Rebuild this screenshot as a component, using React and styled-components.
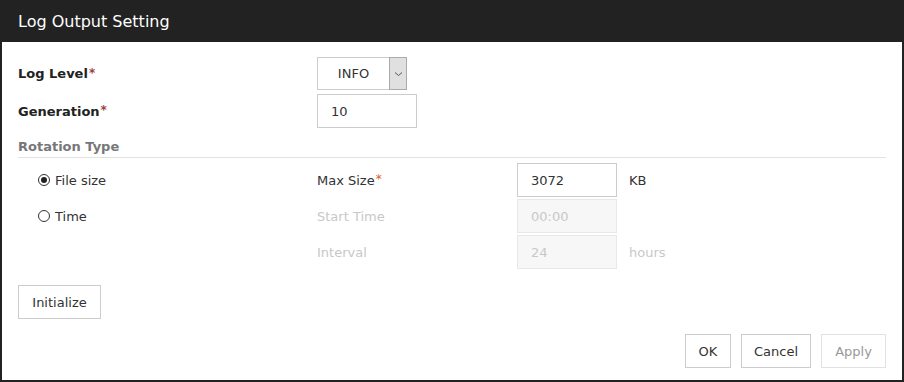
import React from "react";
import styled, { createGlobalStyle } from "styled-components";

const Global = createGlobalStyle`
  html, body { margin: 0; padding: 0; background: #fff; }
  body { font-family: "DejaVu Sans", "Noto Sans", sans-serif; }
`;

const Dialog = styled.div`
  width: 904px;
  height: 382px;
  box-sizing: border-box;
  border: 2px solid #222;
  border-top: none;
  display: flex;
  flex-direction: column;
  background: #fff;
`;

const Title = styled.div`
  height: 42px;
  background: #222;
  color: #fff;
  font-size: 16px;
  display: flex;
  align-items: center;
  margin: 0 -2px;
  padding-left: 18px;
`;

const Body = styled.div`
  flex: 1;
  padding: 15px 16px 0 16px;
  display: flex;
  flex-direction: column;
`;

const Row = styled.div`
  display: grid;
  grid-template-columns: ${(p) => p.$cols || "299px 1fr"};
  align-items: center;
  height: ${(p) => p.$h || 34}px;
  margin-bottom: ${(p) => p.$mb || 0}px;
`;

const Label = styled.div`
  font-size: 13px;
  color: ${(p) => (p.$disabled ? "#c8c8c8" : p.$bold ? "#222" : "#333")};
  font-weight: ${(p) => (p.$bold ? "bold" : "normal")};
  padding-left: ${(p) => p.$indent || 0}px;
  display: flex;
  align-items: center;
`;

const Req = styled.sup`
  color: ${(p) => (p.$orange ? "#e06020" : "#a04040")};
  font-size: 12px;
  margin-left: 1px;
  line-height: 0;
  position: relative;
  top: -1px;
`;

const SelectBox = styled.div`
  width: 90px;
  height: 33px;
  box-sizing: border-box;
  border: 1px solid #ccc;
  display: flex;
  font-size: 13px;
  color: #333;
`;

const SelectText = styled.div`
  flex: 1;
  display: flex;
  align-items: center;
  justify-content: center;
`;

const SelectBtn = styled.div`
  width: 16px;
  border: 1px solid #aaa;
  margin: -1px -1px -1px 0;
  background: #e0e0e0;
  display: flex;
  align-items: center;
  justify-content: center;
`;

const Input = styled.div`
  width: 100px;
  height: 34px;
  box-sizing: border-box;
  border: 1px solid ${(p) => (p.$disabled ? "#e8e8e8" : "#ccc")};
  background: ${(p) => (p.$disabled ? "#f7f7f7" : "#fff")};
  color: ${(p) => (p.$disabled ? "#c8c8c8" : "#333")};
  font-size: 13px;
  display: flex;
  align-items: center;
  padding-left: 13px;
`;

const Section = styled.div`
  font-size: 13px;
  font-weight: bold;
  color: #777;
  padding: 12px 0 3px;
  border-bottom: 1px solid #e2e2e2;
  margin: 0 0 5px 0;
`;

const Radio = styled.span`
  width: 12px;
  height: 12px;
  border-radius: 50%;
  border: 1px solid #333;
  box-sizing: border-box;
  display: inline-flex;
  align-items: center;
  justify-content: center;
  margin-right: 5px;
  &::after {
    content: "";
    width: 6px;
    height: 6px;
    border-radius: 50%;
    background: ${(p) => (p.$on ? "#222" : "transparent")};
  }
`;

const Unit = styled.div`
  font-size: 13px;
  color: ${(p) => (p.$disabled ? "#c8c8c8" : "#333")};
  padding-left: 12px;
`;

const Field = styled.div`
  display: flex;
  align-items: center;
`;

const Button = styled.div`
  width: ${(p) => p.$w}px;
  height: 34px;
  box-sizing: border-box;
  border: 1px solid ${(p) => (p.$disabled ? "#e2e2e2" : "#ccc")};
  color: ${(p) => (p.$disabled ? "#999" : "#333")};
  font-size: 13px;
  display: flex;
  align-items: center;
  justify-content: center;
  background: #fff;
`;

const InitRow = styled.div`
  margin-top: 16px;
  display: flex;
`;

const Footer = styled.div`
  display: flex;
  justify-content: flex-end;
  gap: 10px;
  margin-top: 15px;
`;

export default function App() {
  return (
    <>
      <Global />
      <Dialog>
        <Title>Log Output Setting</Title>
        <Body>
          <Row $h={33} $mb={4}>
            <Label $bold>Log Level<Req>*</Req></Label>
            <SelectBox>
              <SelectText>INFO</SelectText>
              <SelectBtn>
                <svg width="9" height="6" viewBox="0 0 9 6">
                  <path d="M1 1.5 L4.5 4.5 L8 1.5" fill="none" stroke="#555" strokeWidth="1" />
                </svg>
              </SelectBtn>
            </SelectBox>
          </Row>
          <Row $h={33}>
            <Label $bold>Generation<Req>*</Req></Label>
            <Input>10</Input>
          </Row>
          <Section>Rotation Type</Section>
          <Row $cols="299px 200px 1fr" $h={34} $mb={2}>
            <Label $indent={20}><Radio $on />File size</Label>
            <Label>Max Size<Req $orange>*</Req></Label>
            <Field><Input>3072</Input><Unit>KB</Unit></Field>
          </Row>
          <Row $cols="299px 200px 1fr" $h={34} $mb={2}>
            <Label $indent={20}><Radio />Time</Label>
            <Label $disabled>Start Time</Label>
            <Field><Input $disabled>00:00</Input></Field>
          </Row>
          <Row $cols="299px 200px 1fr" $h={34}>
            <div />
            <Label $disabled>Interval</Label>
            <Field><Input $disabled>24</Input><Unit $disabled>hours</Unit></Field>
          </Row>
          <InitRow>
            <Button $w={83}>Initialize</Button>
          </InitRow>
          <Footer>
            <Button $w={46}>OK</Button>
            <Button $w={70}>Cancel</Button>
            <Button $w={65} $disabled>Apply</Button>
          </Footer>
        </Body>
      </Dialog>
    </>
  );
}
